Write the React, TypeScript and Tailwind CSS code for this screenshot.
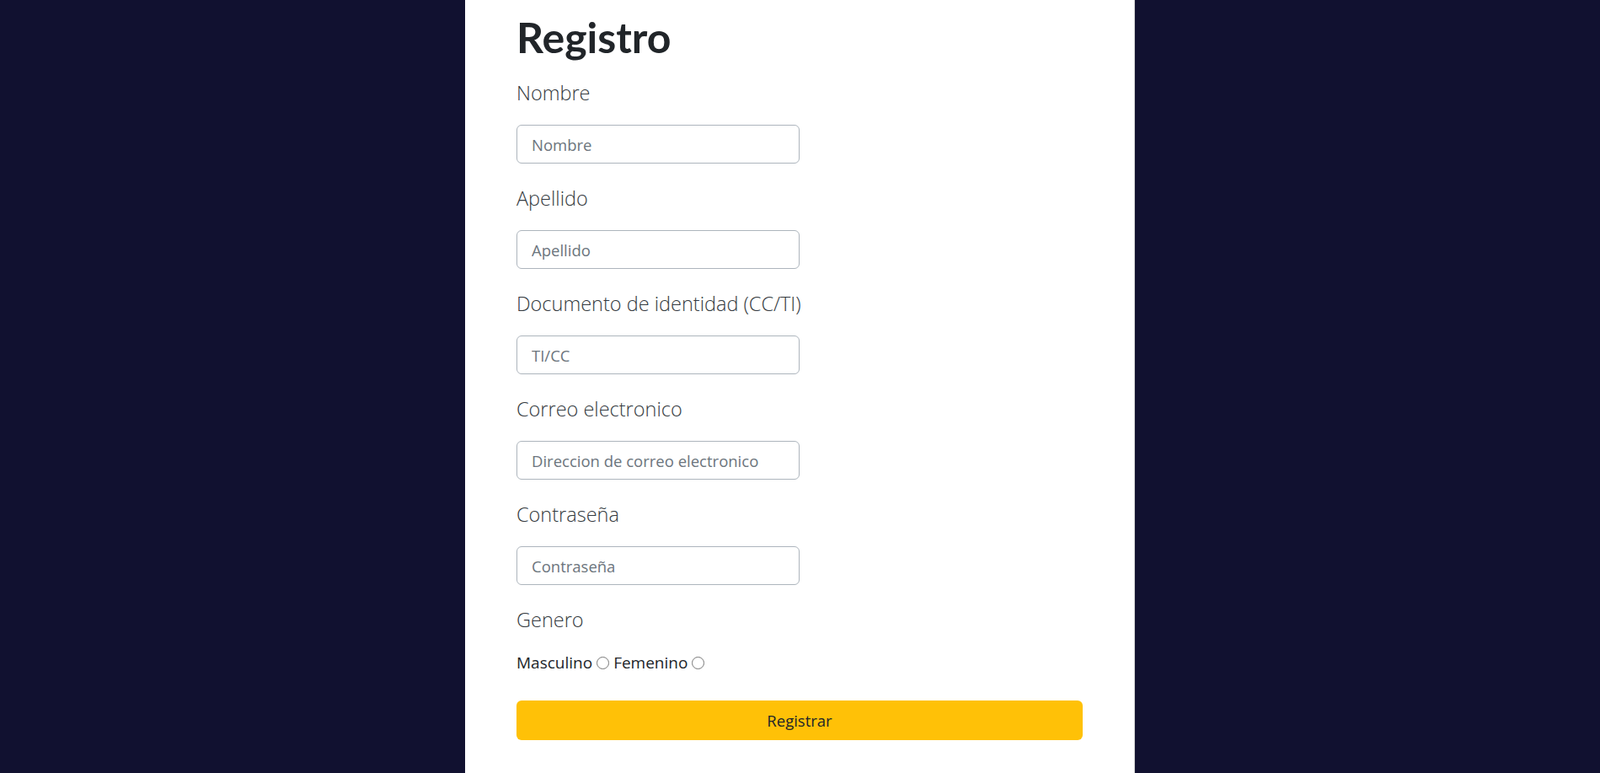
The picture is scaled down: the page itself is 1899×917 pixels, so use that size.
import React from "react";

const fields = [
  { label: "Nombre", placeholder: "Nombre", type: "text" },
  { label: "Apellido", placeholder: "Apellido", type: "text" },
  { label: "Documento de identidad (CC/TI)", placeholder: "TI/CC", type: "text" },
  { label: "Correo electronico", placeholder: "Direccion de correo electronico", type: "email" },
  { label: "Contraseña", placeholder: "Contraseña", type: "password" },
];

const App = () => {
  return (
    <div className="min-h-screen bg-[#111130] flex justify-center font-['Open_Sans',sans-serif]">
      <div className="w-[795px] bg-white min-h-screen px-[61px] border-r border-[#d0d0d0]">
        <h1 className="text-[50px] font-bold leading-[60px] text-[#212529] mt-[14px] font-['Lato',sans-serif]">
          Registro
        </h1>
        <form>
          {fields.map((f, idx) => (
            <div key={idx} className={idx === 0 ? "pt-[22px]" : "pt-[27px]"}>
              <label className="block mb-[23px] text-[23.5px] font-light text-[#343a40] leading-[29px]">
                {f.label}
              </label>
              <input
                type={f.type}
                placeholder={f.placeholder}
                className="block w-[336px] h-[46px] px-[17px] text-[18.5px] border border-[#adb5bd] rounded-[6px] placeholder:text-[#6c757d] outline-none"
              />
            </div>
          ))}
          <label className="block pt-[27px] mb-[23px] text-[23.5px] font-light text-[#343a40] leading-[29px]">
            Genero
          </label>
          <div className="flex items-center h-[26px] text-[19px] text-[#212529]">
            <span>Masculino</span>
            <input type="radio" name="genero" className="mx-[5px] w-[15px] h-[15px]" />
            <span>Femenino</span>
            <input type="radio" name="genero" className="ml-[5px] w-[15px] h-[15px]" />
          </div>
          <button
            type="button"
            className="mt-[32px] w-full h-[47px] bg-[#ffc107] rounded-[6px] text-[18.5px] text-[#212529]"
          >
            Registrar
          </button>
        </form>
      </div>
    </div>
  );
};

export default App;
